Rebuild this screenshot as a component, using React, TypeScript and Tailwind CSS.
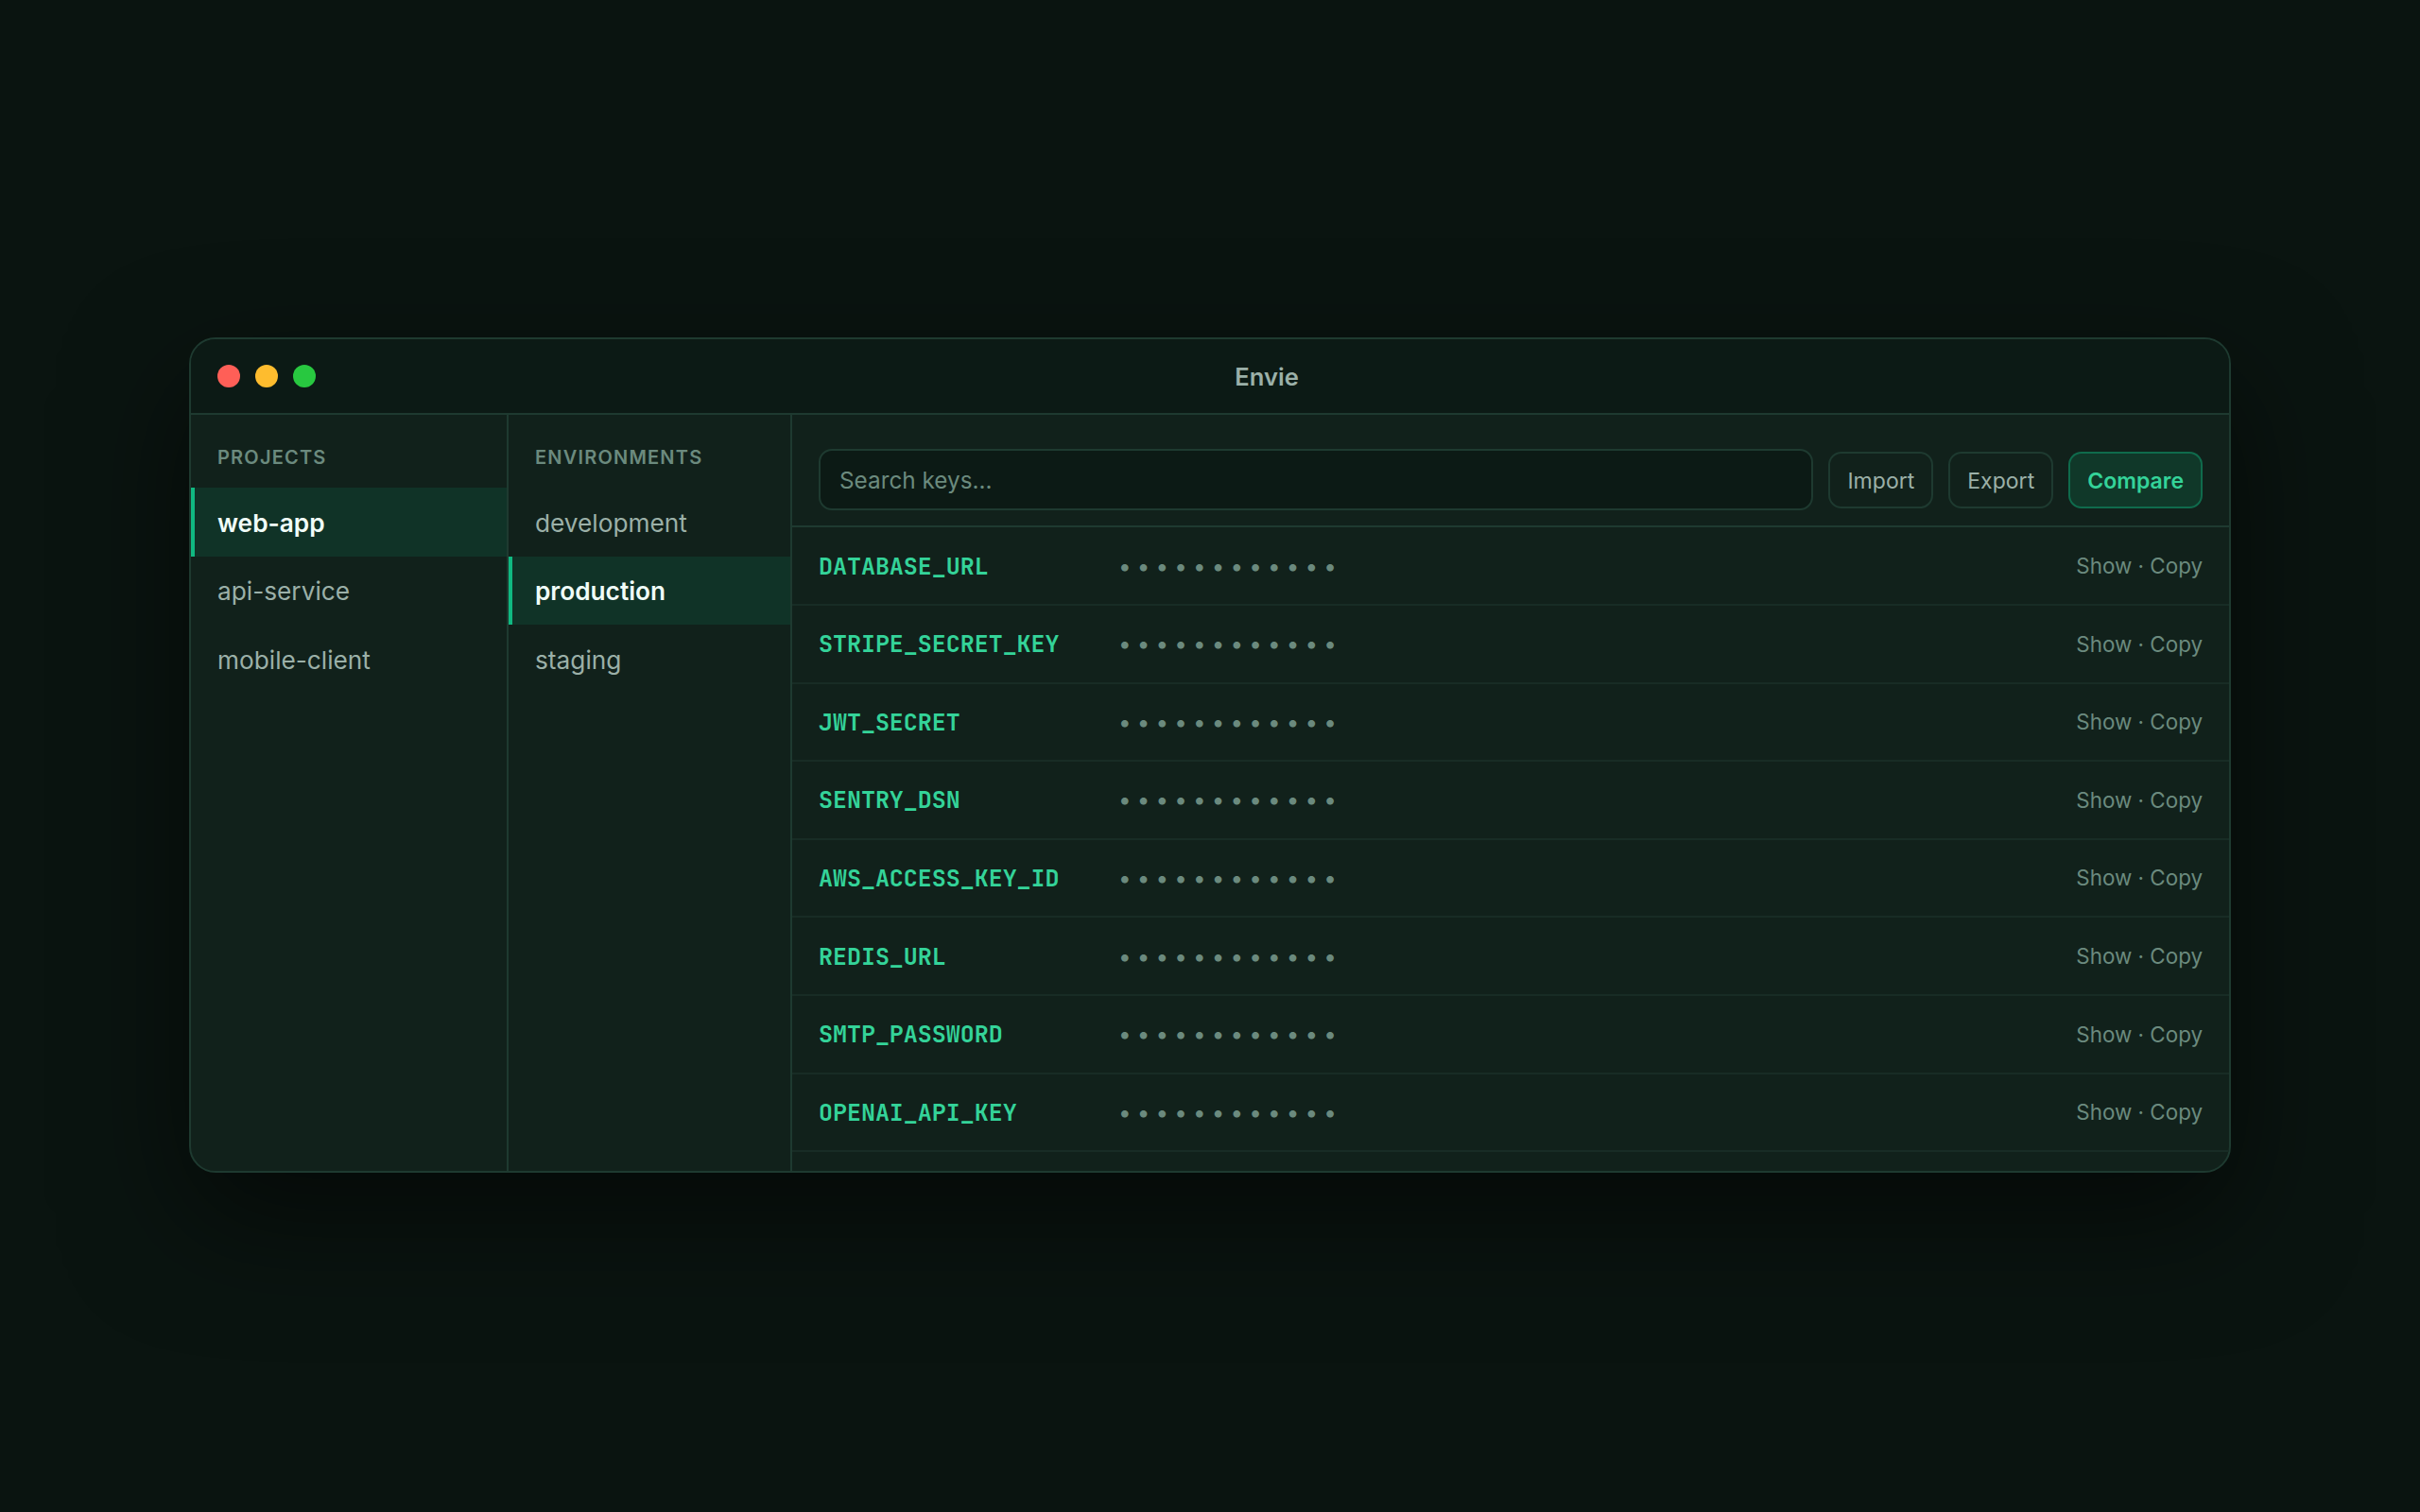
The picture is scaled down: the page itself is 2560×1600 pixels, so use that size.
const projects = ["web-app", "api-service", "mobile-client"];
const environments = ["development", "production", "staging"];

const keys = [
  "DATABASE_URL",
  "STRIPE_SECRET_KEY",
  "JWT_SECRET",
  "SENTRY_DSN",
  "AWS_ACCESS_KEY_ID",
  "REDIS_URL",
  "SMTP_PASSWORD",
  "OPENAI_API_KEY",
];

const itemBase = "border-l-4 pt-[16.5px] pb-[14px] pl-6 text-[26.24px] leading-[42px]";

function Column({
  title,
  items,
  active,
  className,
}: {
  title: string;
  items: string[];
  active: string;
  className: string;
}) {
  return (
    <div className={`shrink-0 border-r-2 border-[#1e3a30] ${className}`}>
      <div className="px-7 pt-[29.5px] pb-[16.5px] text-[20px] leading-[31px] font-semibold tracking-[1.2px] text-[#6b8a7e]">
        {title}
      </div>
      {items.map((item) =>
        item === active ? (
          <div key={item} className={`${itemBase} border-[#10b981] bg-[#10b981]/12 font-semibold text-[#f0fdf8]`}>
            {item}
          </div>
        ) : (
          <div key={item} className={`${itemBase} border-transparent text-[#9bb0a8]`}>
            {item}
          </div>
        )
      )}
    </div>
  );
}

function ToolbarButton({ label, primary = false }: { label: string; primary?: boolean }) {
  return (
    <button
      className={
        primary
          ? "flex h-[59.5px] items-center rounded-[14px] border-2 border-[#10b981]/40 bg-[#10b981]/15 px-[18px] pt-0.5 text-[23.04px] font-semibold text-[#34d399]"
          : "flex h-[59.5px] items-center rounded-[14px] border-2 border-[#1e3a30] px-[18px] pt-0.5 text-[23.04px] text-[#9bb0a8]"
      }
    >
      {label}
    </button>
  );
}

export default function App() {
  return (
    <div className="flex h-[1600px] w-[2560px] items-start justify-center overflow-hidden bg-[#0a1410] pt-[356.7px] font-['Inter',sans-serif]">
      <div className="flex h-[884.4px] w-[2160px] flex-col overflow-hidden rounded-[28px] border-2 border-[#1e3a30] bg-[#11211b] shadow-[0_48px_128px_rgba(0,0,0,0.55)]">
        {/* Title bar */}
        <div className="flex h-[80.5px] shrink-0 items-center gap-4 border-b-2 border-[#1e3a30] bg-[#0c1a15] px-7">
          <span className="size-6 rounded-full bg-[#ff5f57]" />
          <span className="size-6 rounded-full bg-[#febc2e]" />
          <span className="size-6 rounded-full bg-[#28c840]" />
          <div className="flex-1 pt-0.5 text-center text-[25.6px] font-semibold text-[#9bb0a8]">Envie</div>
        </div>

        <div className="flex min-h-0 flex-1">
          <Column title="PROJECTS" items={projects} active="web-app" className="w-[336px]" />
          <Column title="ENVIRONMENTS" items={environments} active="production" className="w-[300px]" />

          <div className="min-w-0 flex-1">
            {/* Toolbar */}
            <div className="flex h-[119.3px] items-center gap-4 border-b-2 border-[#1e3a30] px-7 pt-[20px]">
              <div className="flex h-[65px] flex-1 items-center rounded-[14px] border-2 border-[#1e3a30] bg-[#0c1a15] px-5 pt-px text-[24.32px] text-[#6b8a7e]">
                Search keys…
              </div>
              <ToolbarButton label="Import" />
              <ToolbarButton label="Export" />
              <ToolbarButton label="Compare" primary />
            </div>

            {/* Keys */}
            {keys.map((key) => (
              <div key={key} className="flex h-[82.6px] items-center border-b-2 border-[#182c25] px-7">
                <div className="w-[317px] pt-px font-['JetBrains_Mono','DejaVu_Sans_Mono',monospace] text-[24.96px] font-semibold text-[#34d399]">
                  {key}
                </div>
                <div className="flex-1 text-[24.32px] tracking-[0.25em] text-[#6b8a7e]">••••••••••••</div>
                <div className="text-[22.4px] text-[#6b8a7e]">Show · Copy</div>
              </div>
            ))}
          </div>
        </div>
      </div>
    </div>
  );
}
